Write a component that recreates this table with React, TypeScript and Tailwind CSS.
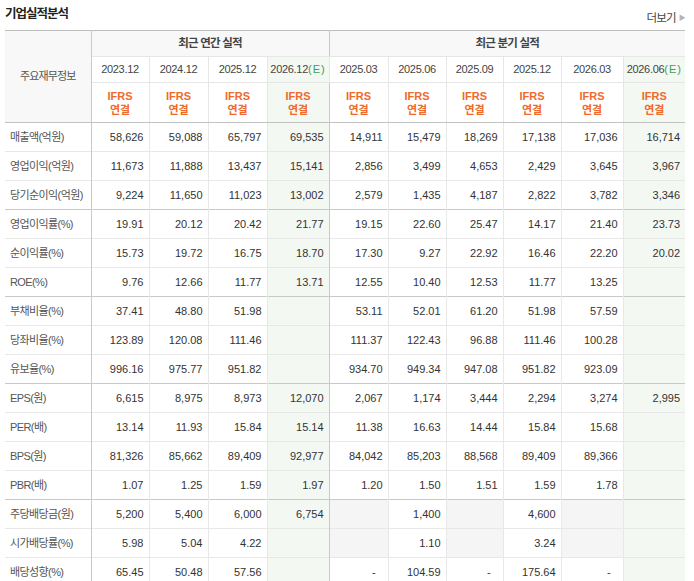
import React from "react";

type Row = {
  label: string;
  annual: string[];
  quarter: string[];
  // quarterly cells with gray (no data) background
  grayQ?: number[];
  groupEnd?: boolean;
};

const annualHeads = ["2023.12", "2024.12", "2025.12", "2026.12"];
const quarterHeads = ["2025.03", "2025.06", "2025.09", "2025.12", "2026.03", "2026.06"];

const rows: Row[] = [
  { label: "매출액(억원)", annual: ["58,626", "59,088", "65,797", "69,535"], quarter: ["14,911", "15,479", "18,269", "17,138", "17,036", "16,714"] },
  { label: "영업이익(억원)", annual: ["11,673", "11,888", "13,437", "15,141"], quarter: ["2,856", "3,499", "4,653", "2,429", "3,645", "3,967"] },
  { label: "당기순이익(억원)", annual: ["9,224", "11,650", "11,023", "13,002"], quarter: ["2,579", "1,435", "4,187", "2,822", "3,782", "3,346"], groupEnd: true },
  { label: "영업이익률(%)", annual: ["19.91", "20.12", "20.42", "21.77"], quarter: ["19.15", "22.60", "25.47", "14.17", "21.40", "23.73"] },
  { label: "순이익률(%)", annual: ["15.73", "19.72", "16.75", "18.70"], quarter: ["17.30", "9.27", "22.92", "16.46", "22.20", "20.02"] },
  { label: "ROE(%)", annual: ["9.76", "12.66", "11.77", "13.71"], quarter: ["12.55", "10.40", "12.53", "11.77", "13.25", ""], groupEnd: true },
  { label: "부채비율(%)", annual: ["37.41", "48.80", "51.98", ""], quarter: ["53.11", "52.01", "61.20", "51.98", "57.59", ""] },
  { label: "당좌비율(%)", annual: ["123.89", "120.08", "111.46", ""], quarter: ["111.37", "122.43", "96.88", "111.46", "100.28", ""] },
  { label: "유보율(%)", annual: ["996.16", "975.77", "951.82", ""], quarter: ["934.70", "949.34", "947.08", "951.82", "923.09", ""], groupEnd: true },
  { label: "EPS(원)", annual: ["6,615", "8,975", "8,973", "12,070"], quarter: ["2,067", "1,174", "3,444", "2,294", "3,274", "2,995"] },
  { label: "PER(배)", annual: ["13.14", "11.93", "15.84", "15.14"], quarter: ["11.38", "16.63", "14.44", "15.84", "15.68", ""] },
  { label: "BPS(원)", annual: ["81,326", "85,662", "89,409", "92,977"], quarter: ["84,042", "85,203", "88,568", "89,409", "89,366", ""] },
  { label: "PBR(배)", annual: ["1.07", "1.25", "1.59", "1.97"], quarter: ["1.20", "1.50", "1.51", "1.59", "1.78", ""], groupEnd: true },
  { label: "주당배당금(원)", annual: ["5,200", "5,400", "6,000", "6,754"], quarter: ["", "1,400", "", "4,600", "", ""], grayQ: [0, 2, 4] },
  { label: "시가배당률(%)", annual: ["5.98", "5.04", "4.22", ""], quarter: ["", "1.10", "", "3.24", "", ""], grayQ: [0, 2, 4] },
  { label: "배당성향(%)", annual: ["65.45", "50.48", "57.56", ""], quarter: ["-", "104.59", "-", "175.64", "-", ""] },
];

const colWidths = [86, 58, 59, 59, 62, 59, 58, 57, 58, 62, 62];

function YearHead({ y, est }: { y: string; est?: boolean }) {
  return (
    <th
      className={`h-[26px] border-b border-l border-[#e6e6e6] p-0 text-center text-[11px] font-normal tracking-[-0.3px] text-[#444] ${
        est ? "bg-[#f3f8f3]" : "bg-white"
      }`}
    >
      {y}
      {est && <span className="tracking-[1px] text-[#3f9c5e]">(E)</span>}
    </th>
  );
}

function IfrsHead({ est, groupStart }: { est?: boolean; groupStart?: boolean }) {
  return (
    <th
      className={`h-[40px] border-b border-l p-0 text-center text-[11px] font-bold leading-[14px] text-[#ee6a2d] ${
        groupStart ? "border-l-[#c9c9c9]" : "border-l-[#e6e6e6]"
      } border-b-[#c2c2c2] ${est ? "bg-[#f3f8f3]" : "bg-white"}`}
    >
      IFRS
      <br />
      연결
    </th>
  );
}

export default function App() {
  return (
    <div className="w-[694px] bg-white" style={{ fontFamily: '"Liberation Sans", "Noto Sans CJK KR", sans-serif' }}>
      {/* Title */}
      <div className="flex h-[30px] items-start justify-between pl-[5px] pr-[9px]">
        <h2 className="mt-[5px] text-[12.5px] font-bold tracking-[-1px] text-[#222]">기업실적분석</h2>
        <a className="mt-[10px] flex items-center gap-[3px] text-[11.5px] tracking-[-0.8px] text-[#444]">
          더보기
          <span className="text-[7px] text-[#b5b5b5]">▶</span>
        </a>
      </div>

      {/* Table */}
      <table className="ml-[5px] w-[680px] table-fixed border-collapse">
        <colgroup>
          {colWidths.map((w, i) => (
            <col key={i} style={{ width: w }} />
          ))}
        </colgroup>
        <thead>
          <tr className="border-t border-[#bdbdbd]">
            <th
              rowSpan={3}
              className="border-r border-b border-r-[#c9c9c9] border-b-[#c2c2c2] bg-[#f8f8f8] p-0 text-center text-[11px] font-normal tracking-[-0.9px] text-[#555]"
            >
              주요재무정보
            </th>
            <th
              colSpan={4}
              className="h-[26px] border-b border-[#e6e6e6] bg-[#f8f8f8] p-0 text-center text-[11.5px] font-bold tracking-[-0.8px] text-[#444]"
            >
              최근 연간 실적
            </th>
            <th
              colSpan={6}
              className="h-[26px] border-b border-l border-b-[#e6e6e6] border-l-[#c9c9c9] bg-[#f8f8f8] p-0 text-center text-[11.5px] font-bold tracking-[-0.8px] text-[#444]"
            >
              최근 분기 실적
            </th>
          </tr>
          <tr>
            {annualHeads.map((y, i) => (
              <YearHead key={y} y={y} est={i === 3} />
            ))}
            {quarterHeads.map((y, i) => (
              <YearHead key={y} y={y} est={i === 5} />
            ))}
          </tr>
          <tr>
            {annualHeads.map((y, i) => (
              <IfrsHead key={y} est={i === 3} />
            ))}
            {quarterHeads.map((y, i) => (
              <IfrsHead key={y} est={i === 5} groupStart={i === 0} />
            ))}
          </tr>
        </thead>
        <tbody>
          {rows.map((r) => (
            <tr key={r.label} className={`border-b ${r.groupEnd ? "border-[#c9c9c9]" : "border-[#e8e8e8]"}`}>
              <th className="h-[29px] border-r border-[#c9c9c9] p-0 pl-[5px] text-left text-[11px] font-normal tracking-[-0.6px] text-[#555]">
                {r.label}
              </th>
              {r.annual.map((v, i) => (
                <td
                  key={i}
                  className={`border-l border-[#e8e8e8] p-0 pr-[5px] text-right text-[11px] text-[#333] ${
                    i === 3 ? "bg-[#f3f8f3]" : "bg-white"
                  }`}
                >
                  {v}
                </td>
              ))}
              {r.quarter.map((v, i) => (
                <td
                  key={i}
                  className={`border-l p-0 pr-[5px] text-right text-[11px] text-[#333] ${
                    i === 0 ? "border-l-[#c9c9c9]" : "border-l-[#e8e8e8]"
                  } ${i === 5 ? "bg-[#f3f8f3]" : r.grayQ?.includes(i) ? "bg-[#f5f5f5]" : "bg-white"} ${
                    v === "-" ? "pr-[12px]" : ""
                  }`}
                >
                  {v}
                </td>
              ))}
            </tr>
          ))}
        </tbody>
      </table>
    </div>
  );
}
